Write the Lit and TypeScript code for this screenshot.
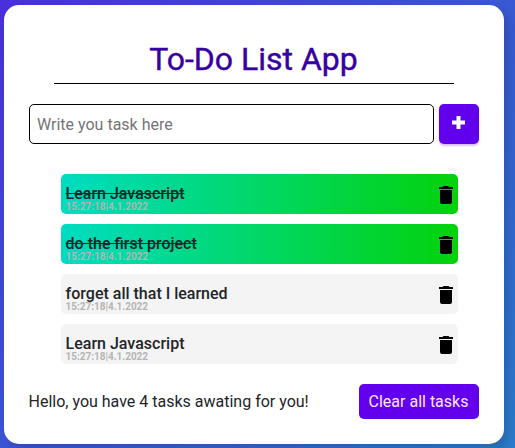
import { LitElement, html, css } from "lit";
import { customElement, property } from "lit/decorators.js";
import { classMap } from "lit/directives/class-map.js";

interface Task {
  text: string;
  time: string;
  done: boolean;
}

@customElement("task-item")
class TaskItem extends LitElement {
  @property({ attribute: false }) task!: Task;

  static styles = css`
    :host { display: block; }
    .item {
      display: flex;
      align-items: flex-start;
      justify-content: space-between;
      height: 40px;
      box-sizing: border-box;
      padding: 0 2px 0 4.6px;
      border-radius: 5px;
      background: #f4f4f4;
    }
    .item.done { background: linear-gradient(90deg, #00dcc3, #03d20a); }
    .label { padding-top: 11px; }
    .text {
      font-size: 16px;
      font-weight: 500;
      line-height: 17px;
      color: #212529;
    }
    .done .text { text-decoration: line-through; }
    .time {
      font-size: 10px;
      font-weight: 700;
      line-height: 10px;
      letter-spacing: -0.02px;
      color: #b4b4b4;
    }
    svg { display: block; width: 20px; height: 24px; margin-top: 9px; }
  `;

  render() {
    return html`<div class=${classMap({ item: true, done: this.task.done })}>
      <div class="label">
        <div class="text">${this.task.text}</div>
        <div class="time">${this.task.time}</div>
      </div>
      <svg viewBox="2 0 20 24" fill="#000">
        <path d="M6 19c0 1.1.9 2 2 2h8c1.1 0 2-.9 2-2V7H6v12zM19 4h-3.5l-1-1h-5l-1 1H5v2h14V4z" />
      </svg>
    </div>`;
  }
}

@customElement("app-root")
class AppRoot extends LitElement {
  private tasks: Task[] = [
    { text: "Learn Javascript", time: "15:27:18|4.1.2022", done: true },
    { text: "do the first project", time: "15:27:18|4.1.2022", done: true },
    { text: "forget all that I learned", time: "15:27:18|4.1.2022", done: false },
    { text: "Learn Javascript", time: "15:27:18|4.1.2022", done: false },
  ];

  static styles = css`
    :host {
      display: block;
      height: 448px;
      box-sizing: border-box;
      padding: 5px 11px 4px 4px;
      overflow: hidden;
      background: linear-gradient(135deg, #4a2fdc, #2b7ccc);
      font-family: Roboto, "Liberation Sans", sans-serif;
      font-size: 16px;
      color: #212529;
    }
    .card {
      height: 439px;
      box-sizing: border-box;
      padding: 35px 25px 0;
      border-radius: 15px;
      background: #fff;
      box-shadow: 5px 5px 10px rgba(0, 0, 0, 0.15);
    }
    h1 {
      margin: 0 25px;
      padding-right: 1px;
      height: 44px;
      box-sizing: border-box;
      border-bottom: 1px solid #000;
      text-align: center;
      font-size: 32px;
      font-weight: 400;
      line-height: 38px;
      -webkit-text-stroke: 0.4px #3700a3;
      color: #3700a3;
    }
    .entry { display: flex; gap: 5px; margin-top: 20px; }
    input {
      flex: 1;
      min-width: 0;
      height: 40px;
      box-sizing: border-box;
      padding: 0 7px;
      border: 1px solid #000;
      border-radius: 5px;
      font: inherit;
    }
    input::placeholder { color: #757575; opacity: 1; }
    button {
      border: 0;
      padding: 0;
      border-radius: 5px;
      background: #6200ee;
      color: #fff;
      font: inherit;
    }
    .add {
      display: flex;
      justify-content: center;
      width: 40px;
      height: 40px;
      box-shadow: 0 2px 2px rgba(98, 0, 238, 0.25);
    }
    .add svg { display: block; width: 13px; height: 13px; margin: 12px 1px 0 0; }
    .list {
      display: flex;
      flex-direction: column;
      gap: 10px;
      margin: 30px 21px 0 32px;
    }
    .footer {
      display: flex;
      align-items: center;
      justify-content: space-between;
      margin-top: 20px;
      height: 35px;
    }
    .footer span { margin-left: -0.5px; }
    .clear { width: 120px; height: 35px; padding-right: 1px; color: #ffe6ff; }
  `;

  render() {
    return html`<div class="card">
      <h1>To-Do List App</h1>
      <div class="entry">
        <input type="text" placeholder="Write you task here" />
        <button class="add" aria-label="Add task">
          <svg viewBox="0 0 13 13" fill="#fff"><path d="M4.5 0h4v4.5H13v4H8.5V13h-4V8.5H0v-4h4.5z" /></svg>
        </button>
      </div>
      <div class="list">
        ${this.tasks.map((task) => html`<task-item .task=${task}></task-item>`)}
      </div>
      <div class="footer">
        <span>Hello, you have ${this.tasks.length} tasks awating for you!</span>
        <button class="clear">Clear all tasks</button>
      </div>
    </div>`;
  }
}
